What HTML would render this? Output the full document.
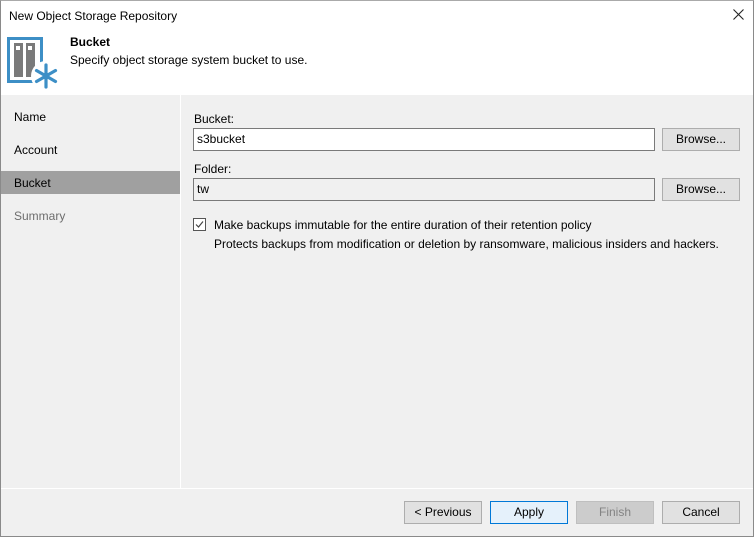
<!DOCTYPE html>
<html><head><style>
*{box-sizing:border-box;margin:0;padding:0}
body{width:754px;height:537px;overflow:hidden;font-family:"Liberation Sans",sans-serif;font-size:12px;color:#000;background:#f0f0f0;position:relative}
.win{position:absolute;left:0;top:0;width:754px;height:537px;border:1px solid #8a8a8a;border-top:1px solid #aaa}
.abs{position:absolute}
.btn{position:absolute;height:23px;border:1px solid #adadad;background:#e1e1e1;text-align:center;line-height:21px;font-size:12px}
.inp{position:absolute;height:23px;border:1px solid #7a7a7a;background:#fff;padding-left:3px;line-height:21px}
</style></head><body>
<div class="win"></div>
<div class="abs" style="left:1px;top:1px;width:752px;height:94px;background:#fff"></div>
<div class="abs" style="left:9px;top:9px;font-size:12px">New Object Storage Repository</div>
<svg class="abs" style="left:733px;top:9px" width="11" height="11"><path d="M0.5 0.5L10.5 10.5M10.5 0.5L0.5 10.5" stroke="#222" stroke-width="1.1"/></svg>
<svg class="abs" style="left:0;top:30px" width="64" height="62">
<rect x="8.5" y="8.5" width="33" height="43" fill="none" stroke="#3d8fc6" stroke-width="3"/>
<rect x="14" y="13" width="9" height="34" fill="#7a7a7a"/><rect x="26" y="13" width="9" height="34" fill="#7a7a7a"/>
<rect x="16" y="16" width="4" height="4" fill="#fff"/><rect x="28" y="16" width="4" height="4" fill="#fff"/>
<circle cx="46" cy="46" r="15" fill="#fff"/>
<g stroke="#3d8fc6" stroke-width="3.2" stroke-linecap="round">
<line x1="46" y1="35" x2="46" y2="57"/><line x1="36.5" y1="40.5" x2="55.5" y2="51.5"/><line x1="36.5" y1="51.5" x2="55.5" y2="40.5"/></g>
<circle cx="46" cy="46" r="3.5" fill="#3d8fc6"/>
</svg>
<div class="abs" style="left:70px;top:35px;font-weight:bold;font-size:12px">Bucket</div>
<div class="abs" style="left:70px;top:53px">Specify object storage system bucket to use.</div>
<div class="abs" style="left:180px;top:95px;width:1px;height:393px;background:#fff"></div>
<div class="abs" style="left:1px;top:488px;width:752px;height:1px;background:#fff"></div>
<div class="abs" style="left:14px;top:110px">Name</div>
<div class="abs" style="left:14px;top:143px">Account</div>
<div class="abs" style="left:1px;top:171px;width:179px;height:23px;background:#a0a0a0"></div>
<div class="abs" style="left:14px;top:176px">Bucket</div>
<div class="abs" style="left:14px;top:209px;color:#6d6d6d">Summary</div>
<div class="abs" style="left:194px;top:112px">Bucket:</div>
<div class="inp" style="left:193px;top:128px;width:462px">s3bucket</div>
<div class="btn" style="left:662px;top:128px;width:78px">Browse...</div>
<div class="abs" style="left:194px;top:162px">Folder:</div>
<div class="inp" style="left:193px;top:178px;width:462px;background:#f0f0f0">tw</div>
<div class="btn" style="left:662px;top:178px;width:78px">Browse...</div>
<div class="abs" style="left:193px;top:218px;width:13px;height:13px;border:1px solid #555;background:#fff"></div>
<svg class="abs" style="left:193px;top:218px" width="13" height="13"><path d="M3 6.5 L5.5 9 L10 3.5" fill="none" stroke="#444" stroke-width="1.2"/></svg>
<div class="abs" style="left:214px;top:218px">Make backups immutable for the entire duration of their retention policy</div>
<div class="abs" style="left:214px;top:237px">Protects backups from modification or deletion by ransomware, malicious insiders and hackers.</div>
<div class="btn" style="left:404px;top:501px;width:78px">&lt; Previous</div>
<div class="btn" style="left:490px;top:501px;width:78px;border-color:#0078d7;background:#e5f1fb">Apply</div>
<div class="btn" style="left:576px;top:501px;width:78px;border-color:#bfbfbf;background:#ccc;color:#838383">Finish</div>
<div class="btn" style="left:662px;top:501px;width:78px">Cancel</div>
</body></html>
